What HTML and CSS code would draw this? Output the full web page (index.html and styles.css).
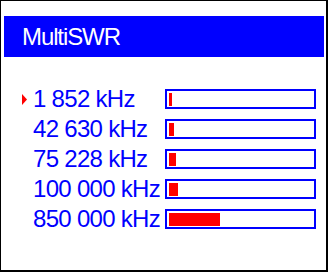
FILE: index.html
```html
<!DOCTYPE html>
<html>
<head>
<meta charset="utf-8">
<link rel="stylesheet" href="styles.css">
</head>
<body>
<div class="screen">
  <div class="header">MultiSWR</div>
  <div class="list">
    <div class="row">
      <span class="marker"><svg width="5" height="11" viewBox="0 0 5 11"><polygon points="0,0 5,5.5 0,11" fill="#ff0000"/></svg></span>
      <span class="freq">1 852 kHz</span>
      <span class="bar"><span class="fill" style="width:3px"></span></span>
    </div>
    <div class="row">
      <span class="marker"></span>
      <span class="freq">42 630 kHz</span>
      <span class="bar"><span class="fill" style="width:5px"></span></span>
    </div>
    <div class="row">
      <span class="marker"></span>
      <span class="freq">75 228 kHz</span>
      <span class="bar"><span class="fill" style="width:7px"></span></span>
    </div>
    <div class="row">
      <span class="marker"></span>
      <span class="freq">100 000 kHz</span>
      <span class="bar"><span class="fill" style="width:9px"></span></span>
    </div>
    <div class="row">
      <span class="marker"></span>
      <span class="freq">850 000 kHz</span>
      <span class="bar"><span class="fill" style="width:51px"></span></span>
    </div>
  </div>
</div>
</body>
</html>
```
FILE: styles.css
```css
html, body {
  margin: 0;
  padding: 0;
  background: #ffffff;
}
.screen {
  box-sizing: border-box;
  width: 328px;
  height: 272px;
  border-style: solid;
  border-color: #000000;
  border-width: 1px 2px 2px 1px;
  padding: 15px 2px 0 3px;
  background: #ffffff;
  font-family: "Liberation Sans", Arial, sans-serif;
}
.header {
  height: 41px;
  line-height: 41px;
  background: #0000ff;
  color: #ffffff;
  font-size: 24px;
  letter-spacing: -1.1px;
  padding-left: 18px;
  white-space: nowrap;
}
.list {
  margin-top: 32px;
  padding-left: 18px;
  display: flex;
  flex-direction: column;
  gap: 10px;
}
.row {
  display: grid;
  grid-template-columns: 11px 132px 151px;
  height: 20px;
  align-items: center;
}
.marker {
  display: flex;
  align-items: center;
  height: 20px;
}
.marker svg {
  display: block;
}
.freq {
  color: #0000ff;
  font-size: 24px;
  line-height: 20px;
  letter-spacing: -0.7px;
  white-space: nowrap;
  height: 20px;
}
.bar {
  box-sizing: border-box;
  height: 20px;
  border: 2px solid #0000ff;
  padding: 2px 2px 0 2px;
  display: flex;
  align-items: flex-start;
}
.fill {
  display: block;
  height: 13px;
  background: #ff0000;
}
```
